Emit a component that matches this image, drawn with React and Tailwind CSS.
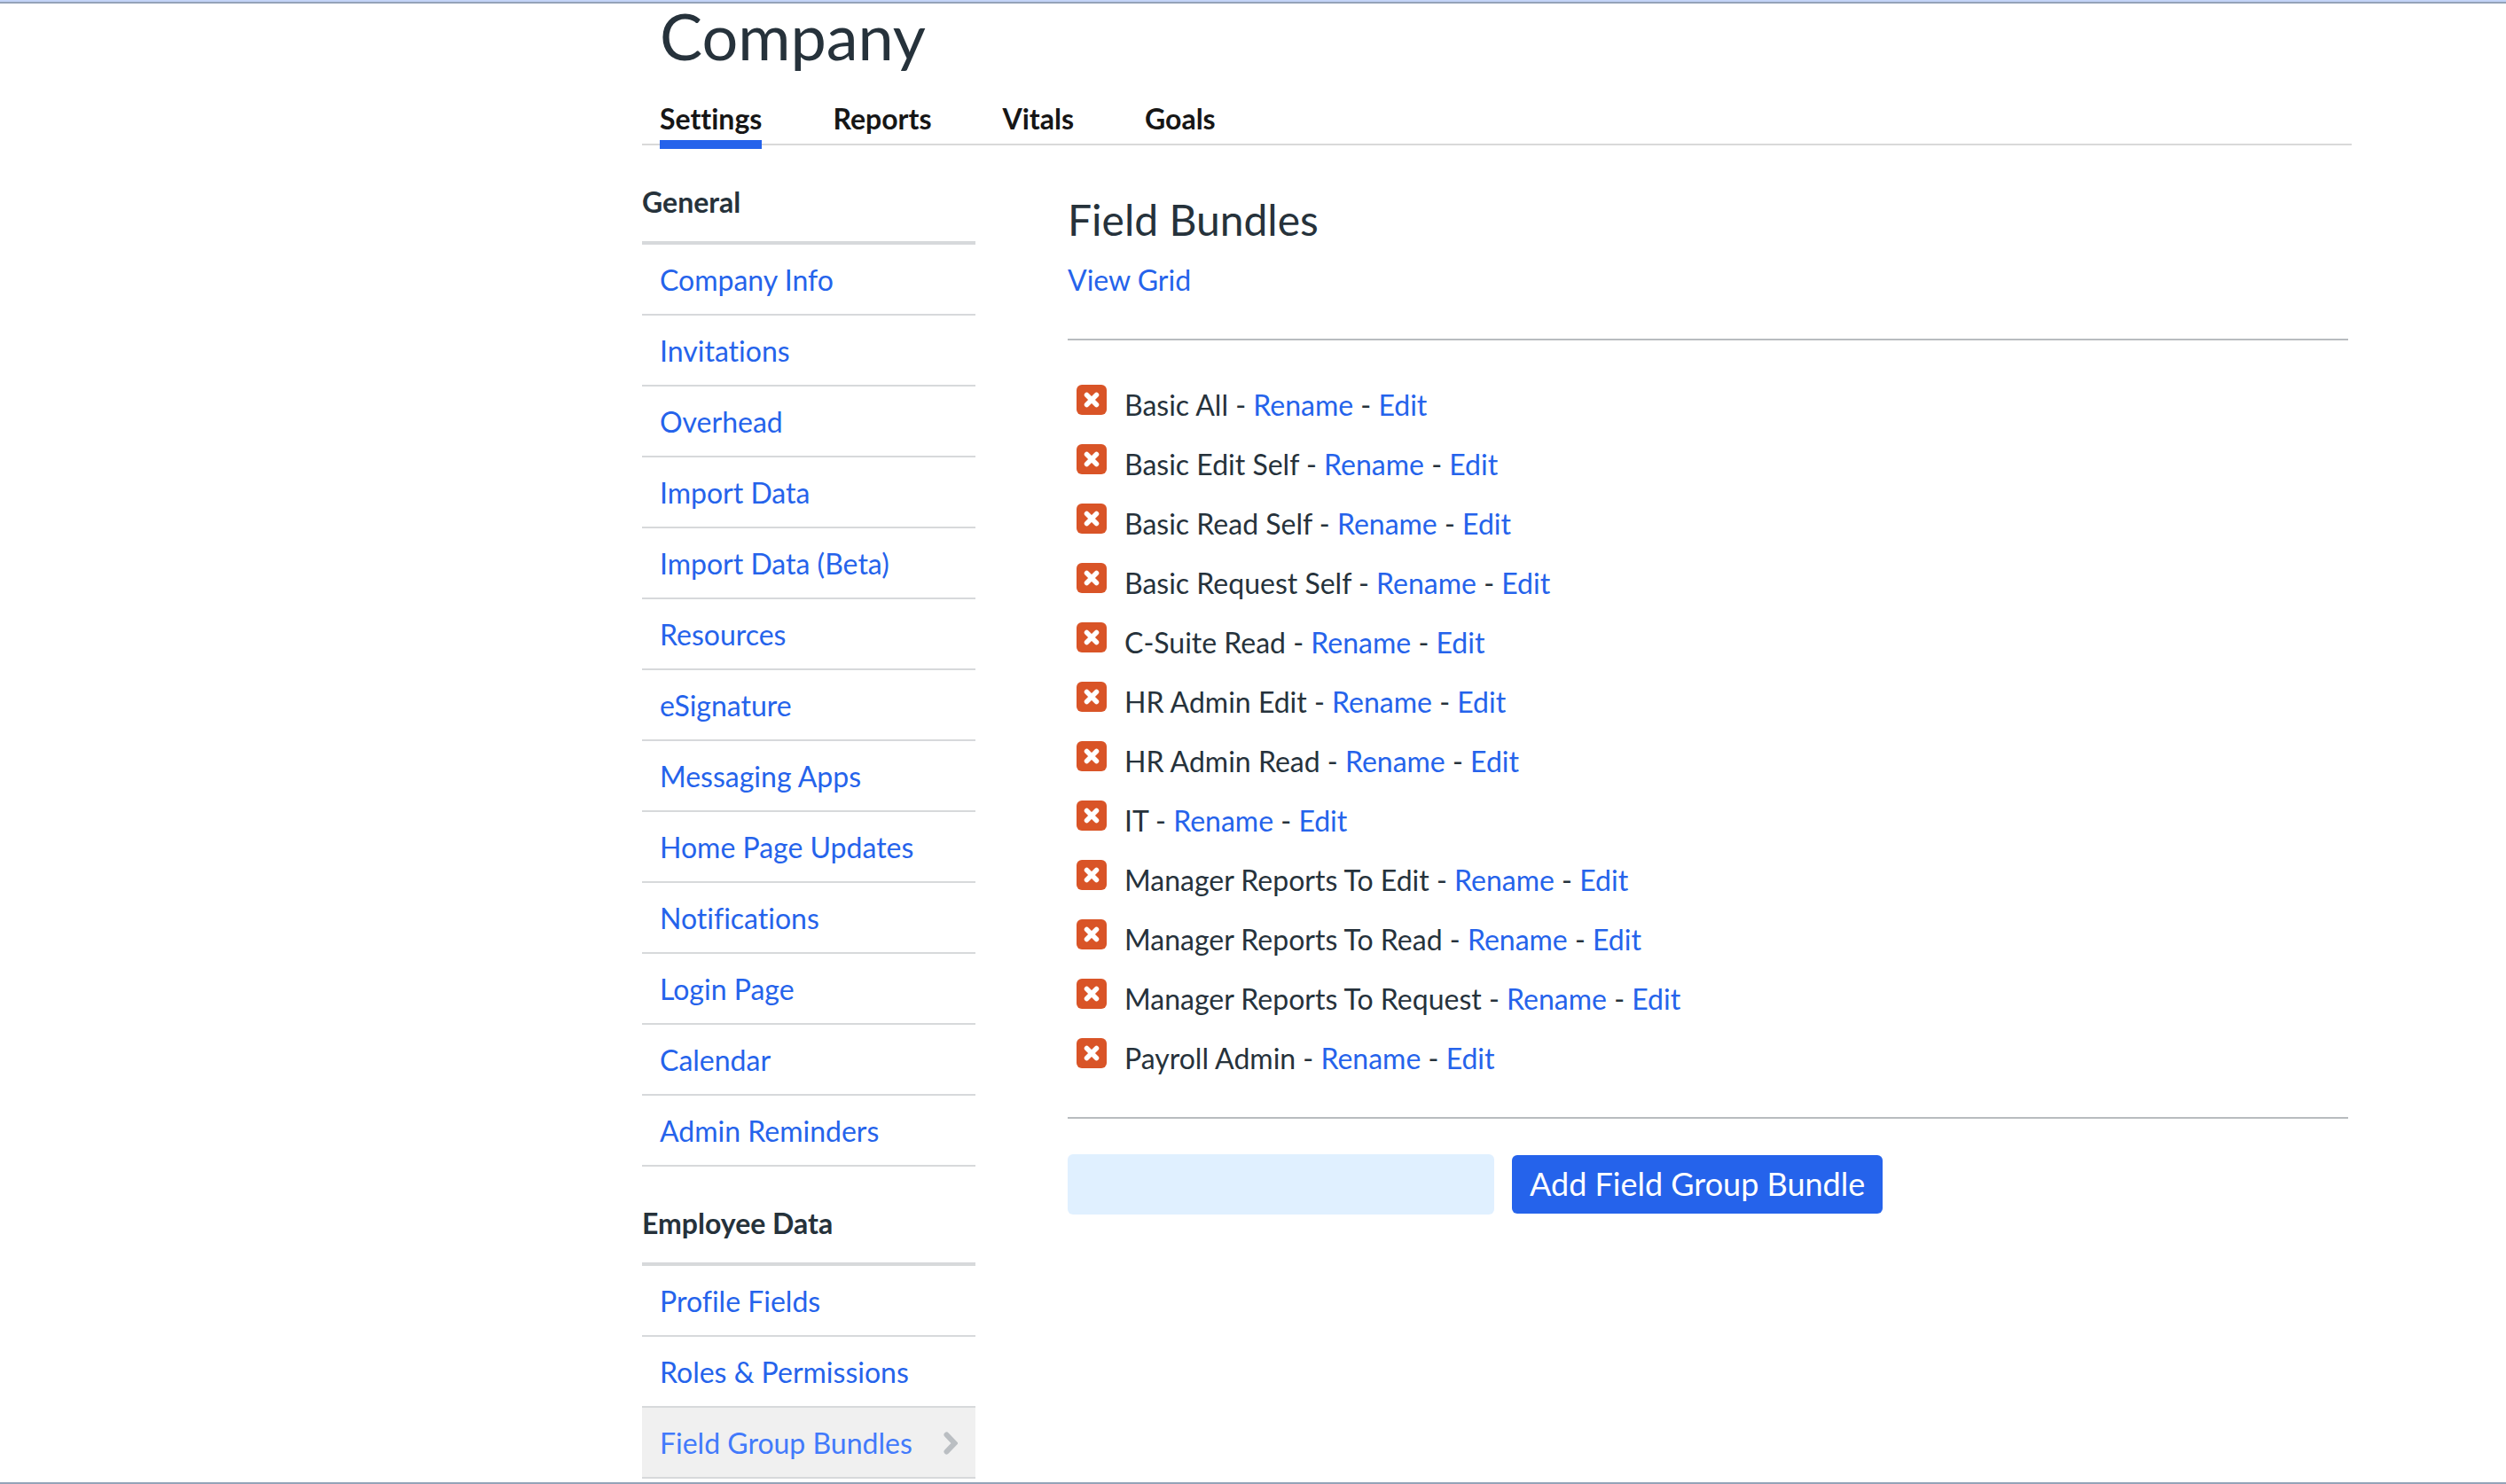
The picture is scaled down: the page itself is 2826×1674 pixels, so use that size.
import { useState } from 'react';

const tabs = ['Settings', 'Reports', 'Vitals', 'Goals'];

const sections = [
  {
    title: 'General',
    items: [
      'Company Info',
      'Invitations',
      'Overhead',
      'Import Data',
      'Import Data (Beta)',
      'Resources',
      'eSignature',
      'Messaging Apps',
      'Home Page Updates',
      'Notifications',
      'Login Page',
      'Calendar',
      'Admin Reminders',
    ],
  },
  {
    title: 'Employee Data',
    items: ['Profile Fields', 'Roles & Permissions', 'Field Group Bundles'],
  },
];

const initialBundles = [
  'Basic All',
  'Basic Edit Self',
  'Basic Read Self',
  'Basic Request Self',
  'C-Suite Read',
  'HR Admin Edit',
  'HR Admin Read',
  'IT',
  'Manager Reports To Edit',
  'Manager Reports To Read',
  'Manager Reports To Request',
  'Payroll Admin',
];

function SideSection({ title, items, active }) {
  return (
    <section>
      <h2 className="pt-11 pb-6 border-b-4 border-[#d7d9db] font-bold">
        {title}
      </h2>
      <ul>
        {items.map((item) => (
          <li key={item} className="border-b-2 border-[#d7d9db]">
            <a
              href="#"
              className={
                item === active
                  ? 'flex items-center justify-between h-[78px] pt-[2px] pl-5 pr-5 bg-[#f0f0f0] text-[#427afb]'
                  : 'flex items-center h-[78px] pt-[2px] pl-5 text-[#2563eb]'
              }
            >
              {item}
              {item === active && (
                <svg className="w-4 h-[26px]" viewBox="0 0 16 26" fill="none" aria-hidden="true">
                  <path d="M3.5 3.5 L12.5 13 L3.5 22.5" stroke="#babec2" strokeWidth="6" strokeLinecap="round" />
                </svg>
              )}
            </a>
          </li>
        ))}
      </ul>
    </section>
  );
}

function BundleRow({ name, onRemove }) {
  return (
    <li className="flex items-center h-[67px] pl-[10px]">
      <button
        type="button"
        aria-label={`Delete ${name}`}
        onClick={onRemove}
        className="flex items-center justify-center w-[34px] h-[34px] mb-[9px] mr-5 rounded-[6px] bg-[#d95427]"
      >
        <svg className="w-[18px] h-[18px]" viewBox="0 0 18 18" aria-hidden="true">
          <path d="M3.5 3.5 L14.5 14.5 M14.5 3.5 L3.5 14.5" stroke="#fff" strokeWidth="5.5" strokeLinecap="round" />
        </svg>
      </button>
      <p className="pt-[2px]">
        {name} - <a href="#" className="text-[#2563eb]">Rename</a> -{' '}
        <a href="#" className="text-[#2563eb]">Edit</a>
      </p>
    </li>
  );
}

export default function App() {
  const [bundles, setBundles] = useState(initialBundles);
  const [newName, setNewName] = useState('');

  const addBundle = (e) => {
    e.preventDefault();
    if (!newName.trim()) return;
    setBundles([...bundles, newName.trim()]);
    setNewName('');
  };

  return (
    <div className="min-h-screen flex flex-col justify-between bg-white font-['Lato',sans-serif] [font-variant-ligatures:none] text-[32px] leading-[40px] text-[#26323b]">
      <div>
        <div className="h-1 bg-[#c3d4f7] border-b-2 border-[#94a3b8]" />
        <div className="pl-[724px] pr-[174px]">
          <h1 className="pl-5 text-[72px] leading-[72px]">Company</h1>
          <nav className="flex gap-20 pl-5 pt-[38px] border-b-2 border-[#d9d9d9]">
            {tabs.map((tab) => (
              <a
                key={tab}
                href="#"
                className={
                  tab === 'Settings'
                    ? 'pb-1 -mb-[6px] border-b-[10px] border-[#2563eb] text-[#161616] font-bold'
                    : 'text-[#161616] font-bold'
                }
              >
                {tab}
              </a>
            ))}
          </nav>

          <div className="flex gap-[104px] pr-1">
            <aside className="w-[376px] shrink-0">
              {sections.map((section) => (
                <SideSection key={section.title} {...section} active="Field Group Bundles" />
              ))}
            </aside>

            <main className="flex-1 pt-14">
              <h2 className="text-[48px] leading-[56px]">Field Bundles</h2>
              <a href="#" className="block w-fit mt-5 text-[#2563eb]">View Grid</a>
              <ul className="mt-[46px] pt-[38px] pb-[34px] border-y-2 border-[#b8bcbf]">
                {bundles.map((name) => (
                  <BundleRow
                    key={name}
                    name={name}
                    onRemove={() => setBundles(bundles.filter((b) => b !== name))}
                  />
                ))}
              </ul>
              <form onSubmit={addBundle} className="flex items-center gap-5 mt-10">
                <input
                  type="text"
                  aria-label="Bundle name"
                  value={newName}
                  onChange={(e) => setNewName(e.target.value)}
                  className="w-[481px] h-[68px] px-4 rounded-[6px] bg-[#e0f0ff] focus:outline-none"
                />
                <button
                  type="submit"
                  className="h-[66px] px-5 pb-[2px] rounded-[6px] bg-[#2563eb] text-white text-[36px]"
                >
                  Add Field Group Bundle
                </button>
              </form>
            </main>
          </div>
        </div>
      </div>
      <div className="h-[2px] bg-[#94a3b8]" />
    </div>
  );
}
